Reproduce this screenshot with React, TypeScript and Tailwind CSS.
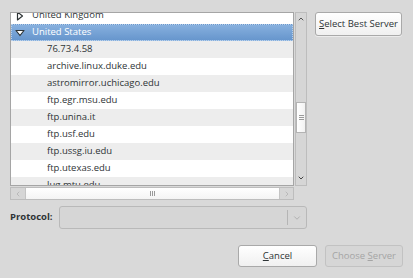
import { ChevronDown, ChevronUp, ChevronLeft, ChevronRight } from 'lucide-react';

const servers = [
  '76.73.4.58',
  'archive.linux.duke.edu',
  'astromirror.uchicago.edu',
  'ftp.egr.msu.edu',
  'ftp.unina.it',
  'ftp.usf.edu',
  'ftp.ussg.iu.edu',
  'ftp.utexas.edu',
  'lug.mtu.edu',
];

function Expander({ open, light }: { open: boolean; light?: boolean }) {
  return (
    <svg width="10" height="10" viewBox="0 0 10 10" className="shrink-0">
      {open ? (
        <path d="M1 2.5 H9 L5 7.5 Z" fill={light ? '#ffffff' : '#ffffff'} stroke="#2e3436" strokeWidth="1.2" strokeLinejoin="round" />
      ) : (
        <path d="M2.5 1 V9 L7.5 5 Z" fill="#ffffff" stroke="#2e3436" strokeWidth="1.2" strokeLinejoin="round" />
      )}
    </svg>
  );
}

export default function App() {
  return (
    <div className="w-[413px] h-[278px] overflow-hidden bg-[#d9d9d9] text-[9.5px] text-[#2e3436] font-['Open_Sans',sans-serif]">
      <div className="flex pt-[12px] pl-[10px]">
        <div className="flex flex-col">
          <div className="flex">
            {/* tree */}
            <div className="w-[284px] h-[174px] border border-[#a5a5a5] bg-white overflow-hidden">
              <div className="-mt-[6px]">
                <div className="h-[17px] flex items-center pl-[4px] bg-white">
                  <Expander open={false} />
                  <span className="ml-[7px]">United Kingdom</span>
                </div>
                <div className="h-[17px] flex items-center pl-[3px] bg-gradient-to-b from-[#87b0de] to-[#6796cd] border border-dotted border-[#b9d0ea] text-white">
                  <Expander open light />
                  <span className="ml-[7px]">United States</span>
                </div>
                {servers.map((s, i) => (
                  <div
                    key={s}
                    className={`h-[17px] flex items-center pl-[36px] ${i % 2 === 0 ? 'bg-[#ededed]' : 'bg-white'}`}
                  >
                    {s}
                  </div>
                ))}
              </div>
            </div>
            {/* vertical scrollbar */}
            <div className="ml-[1px] w-[12px] h-[174px] border border-[#bdbdbd] bg-[#d6d6d6] flex flex-col items-center">
              <ChevronUp size={8} strokeWidth={3} className="mt-[2px] text-[#555]" />
              <div className="mt-[79px] w-[10px] h-[31px] border border-[#b3b3b3] bg-gradient-to-r from-white to-[#f2f2f2] flex flex-col items-center justify-center gap-[1px]">
                <div className="w-[5px] h-px bg-[#9a9a9a]" />
                <div className="w-[5px] h-px bg-[#9a9a9a]" />
                <div className="w-[5px] h-px bg-[#9a9a9a]" />
              </div>
              <ChevronDown size={8} strokeWidth={3} className="mt-auto mb-[3px] text-[#444]" />
            </div>
          </div>
          {/* horizontal scrollbar */}
          <div className="mt-[1px] w-[284px] h-[13px] border border-[#bdbdbd] bg-[#d6d6d6] flex items-center">
            <div className="w-[14px] flex justify-center">
              <ChevronLeft size={8} strokeWidth={2} className="text-[#aaa]" />
            </div>
            <div className="h-[11px] w-[255px] border-x border-[#c4c4c4] bg-gradient-to-b from-white to-[#f4f4f4] flex items-center justify-center gap-[1px]">
              <div className="w-px h-[5px] bg-[#9a9a9a]" />
              <div className="w-px h-[5px] bg-[#9a9a9a]" />
              <div className="w-px h-[5px] bg-[#9a9a9a]" />
            </div>
            <div className="flex-1 flex justify-center">
              <ChevronRight size={8} strokeWidth={2} className="text-[#aaa]" />
            </div>
          </div>
        </div>
        <div className="ml-[8px]">
          <button className="w-[87px] h-[24px] rounded-[3px] border border-[#a9a9a9] bg-gradient-to-b from-white to-[#f0f0f0] text-[#2e3436] shadow-[0_1px_0_#ececec]">
            <span className="underline">S</span>elect Best Server
          </button>
        </div>
      </div>

      <div className="flex items-center mt-[6px] pl-[10px]">
        <span className="w-[49px] font-bold">Protocol:</span>
        <div className="w-[248px] h-[23px] rounded-[3px] border border-[#b9b9b9] bg-[#d6d6d6] flex items-center justify-end">
          <div className="h-[15px] w-px bg-[#b5b5b5]" />
          <ChevronDown size={10} strokeWidth={1.5} className="mx-[4px] text-[#999]" />
        </div>
      </div>

      <div className="flex justify-end gap-[8px] mt-[16px] pr-[10px]">
        <button className="w-[79px] h-[22px] rounded-[3px] border border-[#a9a9a9] bg-gradient-to-b from-white to-[#f0f0f0] text-[#2e3436]">
          <span className="underline">C</span>ancel
        </button>
        <button className="w-[78px] h-[22px] rounded-[3px] border border-[#c2c2c2] bg-[#d6d6d6] text-[#a5a5a5]">
          Choose <span className="underline">S</span>erver
        </button>
      </div>
    </div>
  );
}
